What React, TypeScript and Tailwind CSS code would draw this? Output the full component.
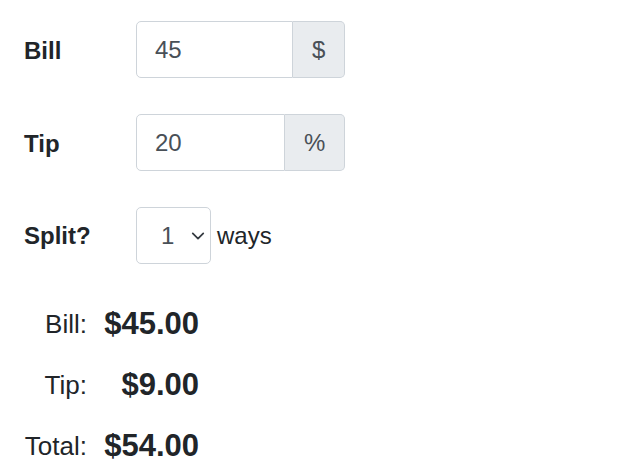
import React from "react";

function InputGroup({ value, addon, inputWidth }: { value: string; addon: string; inputWidth: string }) {
    return (
        <div className="flex h-[57px]">
            <div className={`${inputWidth} flex items-center rounded-l-[5px] border border-[#ced4da] bg-white pl-[18px] text-[24px] text-[#495057]`}>
                {value}
            </div>
            <div className="flex items-center rounded-r-[5px] border border-l-0 border-[#ced4da] bg-[#e9ecef] px-[19px] text-[24px] text-[#495057]">
                {addon}
            </div>
        </div>
    );
}

export default function App() {
    const summary = [
        { label: "Bill:", value: "$45.00" },
        { label: "Tip:", value: "$9.00" },
        { label: "Total:", value: "$54.00" },
    ];

    return (
        <div className="min-h-screen bg-white text-[#212529]" style={{ fontFamily: '"Liberation Sans", Arial, sans-serif' }}>
            <div className="flex flex-col gap-[36px] pl-[24px] pt-[21px]">
                <div className="flex items-center">
                    <div className="mt-[3px] w-[112px] text-[24px] font-bold">Bill</div>
                    <InputGroup value="45" addon="$" inputWidth="w-[157px]" />
                </div>
                <div className="flex items-center">
                    <div className="mt-[3px] w-[112px] text-[24px] font-bold">Tip</div>
                    <InputGroup value="20" addon="%" inputWidth="w-[149px]" />
                </div>
                <div className="flex items-center">
                    <div className="mt-[1px] w-[112px] text-[24px] font-bold">Split?</div>
                    <div className="flex h-[57px] w-[75px] items-center justify-between rounded-[5px] border border-[#ced4da] bg-white pl-[24px] pr-[5px] text-[24px] text-[#495057]">
                        <span>1</span>
                        <svg width="14" height="14" viewBox="0 0 16 16" fill="none" stroke="#343a40" strokeWidth="2" strokeLinecap="round" strokeLinejoin="round">
                            <path d="M2 5l6 6 6-6" />
                        </svg>
                    </div>
                    <span className="ml-[6px] text-[24px]">ways</span>
                </div>
            </div>

            <div className="mt-[30px] flex flex-col pl-[24px]">
                {summary.map((row) => (
                    <div key={row.label} className="flex h-[61px] items-center gap-[14px]">
                        <div className="w-[63px] text-right text-[26px]">{row.label}</div>
                        <div className="w-[98px] text-right text-[31px] font-bold">{row.value}</div>
                    </div>
                ))}
            </div>
        </div>
    );
}
